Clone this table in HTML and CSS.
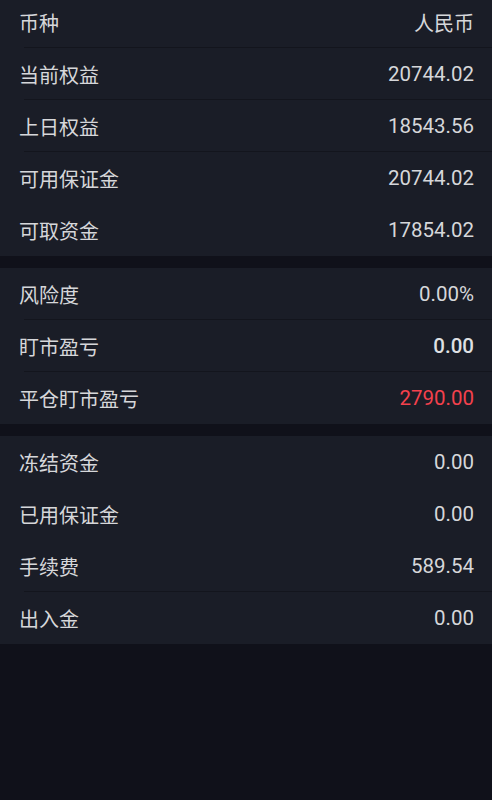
FILE: index.html
```html
<!DOCTYPE html>
<html lang="zh-CN">
<head>
<meta charset="utf-8">
<link rel="stylesheet" href="styles.css">
</head>
<body>
<div class="page">
  <section class="group">
    <div class="row sep"><span class="label">币种</span><span class="value cjk">人民币</span></div>
    <div class="row sep"><span class="label">当前权益</span><span class="value">20744.02</span></div>
    <div class="row sep"><span class="label">上日权益</span><span class="value">18543.56</span></div>
    <div class="row"><span class="label">可用保证金</span><span class="value">20744.02</span></div>
    <div class="row"><span class="label">可取资金</span><span class="value">17854.02</span></div>
  </section>
  <section class="group">
    <div class="row sep"><span class="label">风险度</span><span class="value">0.00%</span></div>
    <div class="row sep"><span class="label">盯市盈亏</span><span class="value strong">0.00</span></div>
    <div class="row"><span class="label">平仓盯市盈亏</span><span class="value red">2790.00</span></div>
  </section>
  <section class="group">
    <div class="row"><span class="label">冻结资金</span><span class="value">0.00</span></div>
    <div class="row"><span class="label">已用保证金</span><span class="value">0.00</span></div>
    <div class="row sep"><span class="label">手续费</span><span class="value">589.54</span></div>
    <div class="row"><span class="label">出入金</span><span class="value">0.00</span></div>
  </section>
</div>
</body>
</html>
```

FILE: styles.css
```css
* { box-sizing: border-box; }
html, body {
  margin: 0;
  padding: 0;
  background: #10111a;
  height: 100%;
}
body {
  font-family: "Noto Sans CJK SC", "Noto Sans", sans-serif;
  color: #d6d7da;
  overflow: hidden;
}
.page {
  margin-top: -4px;
  display: flex;
  flex-direction: column;
  gap: 12px;
}
.group {
  background: #1a1d27;
  display: flex;
  flex-direction: column;
}
.row {
  height: 52px;
  padding: 1px 18px 0 19px;
  display: flex;
  align-items: center;
  justify-content: space-between;
  position: relative;
}
.row.sep::after {
  content: "";
  position: absolute;
  left: 24px;
  right: 0;
  bottom: 0;
  height: 1px;
  background: #13151d;
}
.label {
  font-size: 20px;
  line-height: 1;
}
.value {
  font-family: Roboto, "Noto Sans CJK SC", sans-serif;
  font-size: 20.5px;
  line-height: 1;
}
.value.cjk {
  font-family: "Noto Sans CJK SC", sans-serif;
  font-size: 20px;
}
.value.strong {
  font-weight: 500;
  color: #dfe0e3;
}
.value.red {
  color: #f4414d;
}
```
